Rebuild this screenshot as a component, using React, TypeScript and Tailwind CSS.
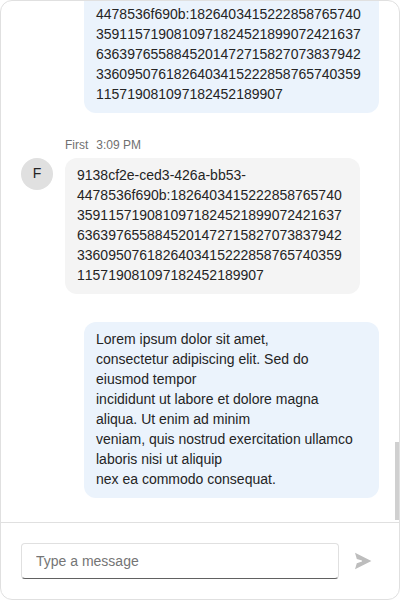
import { useState } from "react";

type Message = {
  id: number;
  mine: boolean;
  author?: string;
  time?: string;
  text: string;
};

const TOKEN =
  "9138cf2e-ced3-426a-bb53-4478536f690b:1826403415222858765740359115719081097182452189907242163763639765588452014727158270738379423360950761826403415222858765740359115719081097182452189907";

const LOREM = [
  "Lorem ipsum dolor sit amet,",
  "consectetur adipiscing elit. Sed do eiusmod tempor",
  "incididunt ut labore et dolore magna aliqua. Ut enim ad minim",
  "veniam, quis nostrud exercitation ullamco laboris nisi ut aliquip",
  "nex ea commodo consequat.",
].join("\n");

const MESSAGES: Message[] = [
  { id: 1, mine: true, text: TOKEN },
  { id: 2, mine: false, author: "First", time: "3:09 PM", text: TOKEN },
  { id: 3, mine: true, text: LOREM },
];

function SentMessage({ message }: { message: Message }) {
  return (
    <li className="mt-7 ml-[63px] shrink-0 rounded-xl bg-[#ebf3fc] pt-[7px] pr-4 pb-[9px] pl-3 break-words whitespace-pre-line [font-kerning:none]">
      {message.text}
    </li>
  );
}

function ReceivedMessage({ message }: { message: Message }) {
  return (
    <li className="mt-6 mr-[19px] grid shrink-0 grid-cols-[32px_minmax(0,1fr)] gap-x-3 gap-y-1">
      <div className="col-start-2 flex gap-2 text-xs leading-[17px] text-[#707070]">
        <span>{message.author}</span>
        <time>{message.time}</time>
      </div>
      <div className="col-start-1 flex size-8 items-center justify-center rounded-full bg-[#e0e0e0] pb-0.5">
        {message.author?.charAt(0)}
      </div>
      <div className="rounded-xl bg-[#f4f4f4] pt-[7px] pr-4 pb-[9px] pl-3 break-words whitespace-pre-line [font-kerning:none]">
        {message.text}
      </div>
    </li>
  );
}

export default function App() {
  const [draft, setDraft] = useState("");

  return (
    <main className="flex h-screen flex-col overflow-hidden rounded-xl border border-[#e0e0e0] bg-white font-['Liberation_Sans',Arial,sans-serif] text-sm text-[#242424]">
      <section className="relative flex min-h-0 flex-1 flex-col justify-end overflow-hidden">
        <ul className="flex flex-col px-5 pb-6">
          {MESSAGES.map((m) =>
            m.mine ? (
              <SentMessage key={m.id} message={m} />
            ) : (
              <ReceivedMessage key={m.id} message={m} />
            ),
          )}
        </ul>
        <div className="absolute right-0 bottom-0.5 h-[78px] w-1 bg-[#d0d0d0]" />
      </section>

      <form
        className="flex shrink-0 items-center gap-2 border-t border-[#e0e0e0] p-5"
        onSubmit={(e) => {
          e.preventDefault();
          setDraft("");
        }}
      >
        <input
          type="text"
          aria-label="Type a message"
          placeholder="Type a message"
          value={draft}
          onChange={(e) => setDraft(e.target.value)}
          className="h-9 min-w-0 flex-1 rounded border border-[#e0e0e0] border-b-[#616161] bg-white px-3.5 outline-none placeholder:text-[#757575]"
        />
        <button
          type="submit"
          aria-label="Send"
          className="flex size-8 items-center justify-center text-[#bdbdbd]"
        >
          <svg viewBox="0 0 20 20" className="size-5" fill="currentColor" aria-hidden="true">
            <path d="M2 1.8 18.4 10 2 18.2 3.8 12.2 9 10.5V9.5L3.8 8Z" />
          </svg>
        </button>
      </form>
    </main>
  );
}
